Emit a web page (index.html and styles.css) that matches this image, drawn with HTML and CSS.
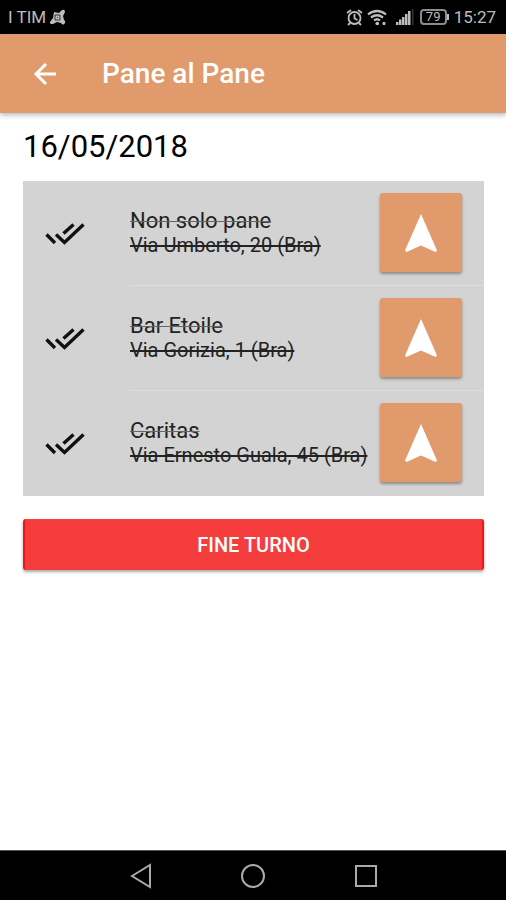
FILE: index.html
```
<!DOCTYPE html>
<html lang="it">
<head>
    <meta charset="utf-8">
    <meta name="viewport" content="width=device-width, initial-scale=1">
    <title>Pane al Pane</title>
    <link rel="stylesheet" href="styles.css">
</head>
<body>
<div class="status-bar">
    <span class="carrier">I TIM</span>
    <svg class="status-logo" width="17" height="17" viewBox="0 0 17 17">
        <path d="M5 3l5 1 3-3q3-1 3 2l-2 4 1 4q2 1 1 3-2 3-4 0l-4-1-4 2q-4 0-3-2l3-4z" fill="#bdbdbd"/>
        <path d="M6 6h5v5H6z" fill="none" stroke="#333333"/>
        <path d="M8 8h1v1H8z" fill="#333333"/>
    </svg>
    <div class="status-icons">
        <svg width="17" height="18" viewBox="0 0 17 18" fill="none" stroke="#bdbdbd" stroke-width="1.8">
            <circle cx="8.5" cy="10" r="6"/>
            <path d="M8.500 6v4.500l3 1.500M1 5l4-3M16 5l-4-3M4 15l-2 2M13 15l2 2"/>
        </svg>
        <svg class="wifi" width="20" height="18" viewBox="0 0 20 18" fill="none" stroke="#bdbdbd" stroke-width="2.2">
            <path d="M1 6.500q9-7 18 0M4 9.500q6-4.500 12 0M7 12.500q3-2.500 6 0"/>
            <path d="M9 14.500h2.500v2H9zM16 14.500h2v2h-2z" fill="#bdbdbd" stroke-width="1"/>
        </svg>
        <svg class="signal" width="19" height="18" viewBox="0 0 19 18">
            <path d="M0 14h2.500v3H0zM3 11.500h2.500V17H3zM6 9h2.500v8H6zM9 6h2.500v11H9zM12 3h2.500v14H12z" fill="#bdbdbd"/>
            <path d="M16 1h1.500v16H16z" fill="#333333"/>
        </svg>
        <span class="battery">79</span>
        <span class="clock">15:27</span>
    </div>
</div>

<header class="toolbar">
    <button class="back" type="button" aria-label="Indietro">
        <svg width="24" height="24" viewBox="0 0 24 24" fill="none" stroke="#ffffff" stroke-width="3">
            <path d="M23 12H3M13 2L3 12l10 10"/>
        </svg>
    </button>
    <h1>Pane al Pane</h1>
</header>

<main class="content">
    <h2 class="date">16/05/2018</h2>
    <ul class="stops">
        <li class="stop">
            <svg class="done" width="40" height="24" viewBox="0 0 40 24">
                <path d="M1.500 12.500l8.500 8.500M11 12.500l8.500 8L38.500 2.500M18.500 11.500l10-9"/>
            </svg>
            <div class="stop-body">
                <div class="stop-text">
                    <h3>Non solo pane</h3>
                    <p>Via Umberto, 20 (Bra)</p>
                </div>
                <button class="navigate" type="button" aria-label="Naviga">
                    <svg width="32" height="38" viewBox="0 0 32 38"><path d="M16 0L32 36.500L30.500 38L16 31.500L1.500 38L0 36.500z"/></svg>
                </button>
            </div>
        </li>
        <li class="stop">
            <svg class="done" width="40" height="24" viewBox="0 0 40 24">
                <path d="M1.500 12.500l8.500 8.500M11 12.500l8.500 8L38.500 2.500M18.500 11.500l10-9"/>
            </svg>
            <div class="stop-body">
                <div class="stop-text">
                    <h3>Bar Etoile</h3>
                    <p>Via Gorizia, 1 (Bra)</p>
                </div>
                <button class="navigate" type="button" aria-label="Naviga">
                    <svg width="32" height="38" viewBox="0 0 32 38"><path d="M16 0L32 36.500L30.500 38L16 31.500L1.500 38L0 36.500z"/></svg>
                </button>
            </div>
        </li>
        <li class="stop">
            <svg class="done" width="40" height="24" viewBox="0 0 40 24">
                <path d="M1.500 12.500l8.500 8.500M11 12.500l8.500 8L38.500 2.500M18.500 11.500l10-9"/>
            </svg>
            <div class="stop-body">
                <div class="stop-text">
                    <h3>Caritas</h3>
                    <p>Via Ernesto Guala, 45 (Bra)</p>
                </div>
                <button class="navigate" type="button" aria-label="Naviga">
                    <svg width="32" height="38" viewBox="0 0 32 38"><path d="M16 0L32 36.500L30.500 38L16 31.500L1.500 38L0 36.500z"/></svg>
                </button>
            </div>
        </li>
    </ul>
    <button class="end-shift" type="button">FINE TURNO</button>
</main>

<nav class="nav-bar">
    <button type="button" aria-label="Indietro">
        <svg width="24" height="26" viewBox="0 0 24 26"><path d="M4 13L22 2v22z"/></svg>
    </button>
    <button type="button" aria-label="Home">
        <svg width="26" height="26" viewBox="0 0 26 26"><circle cx="13" cy="13" r="11"/></svg>
    </button>
    <button type="button" aria-label="Recenti">
        <svg width="24" height="26" viewBox="0 0 24 26"><path d="M2 3h20v20H2z"/></svg>
    </button>
</nav>
</body>
</html>
```
FILE: styles.css
```
* {
    box-sizing: border-box;
}

body {
    display: flex;
    flex-direction: column;
    min-height: 100vh;
    margin: 0;
    background: #ffffff;
    color: #000000;
    font-family: Roboto, sans-serif;
}

h1, h2, h3, p, ul {
    margin: 0;
    padding: 0;
}

button {
    border: 0;
    padding: 0;
    font-family: inherit;
    cursor: pointer;
}

svg {
    display: block;
    flex-shrink: 0;
}

.status-bar {
    display: flex;
    align-items: center;
    height: 34px;
    padding: 0 10px 0 8px;
    background: #000000;
    color: #bdbdbd;
    font-size: 17px;
}

.status-logo {
    margin-left: 3px;
}

.status-icons {
    display: flex;
    align-items: center;
    margin-left: auto;
}

.wifi {
    margin-left: 4px;
}

.signal {
    margin-left: 9px;
}

.battery {
    position: relative;
    width: 27px;
    height: 16px;
    margin-left: 5px;
    border: 2px solid #8c8c8c;
    border-radius: 4px;
    font-size: 13px;
    line-height: 12px;
    text-align: center;
}

.battery:after {
    content: "";
    position: absolute;
    top: 3px;
    right: -4px;
    width: 2px;
    height: 6px;
    background: #bdbdbd;
}

.clock {
    margin-left: 7px;
}

.toolbar {
    display: flex;
    align-items: center;
    height: 79px;
    padding: 0 33px;
    background: #e19a6b;
    box-shadow: 0 2px 5px rgba(60, 80, 110, 0.4);
    color: #ffffff;
}

.back {
    background: none;
}

.toolbar h1 {
    margin-left: 45px;
    font-size: 28px;
    font-weight: 500;
    line-height: 32px;
}

.content {
    flex: 1;
    padding: 16px 22px 16px 23px;
}

.date {
    font-size: 31px;
    font-weight: 400;
    line-height: 36px;
}

.stops {
    margin-top: 16px;
    background: #d3d3d3;
    list-style: none;
}

.stop {
    display: flex;
    align-items: center;
    padding-left: 22px;
}

.done {
    fill: none;
    stroke: #111111;
    stroke-width: 3.4;
}

.stop-body {
    display: flex;
    flex: 1;
    align-items: center;
    justify-content: space-between;
    margin-left: 45px;
    padding: 12px 22px 13px 0;
    border-bottom: 1px solid #dedede;
}

.stop:last-child .stop-body {
    border-bottom-color: #d3d3d3;
}

.stop-text {
    color: #222222;
    white-space: nowrap;
}

.stop-text h3 {
    font-size: 22px;
    font-weight: 400;
    line-height: 24px;
    text-decoration: line-through 1px #666666;
}

.stop-text p {
    font-size: 20px;
    line-height: 24px;
    text-decoration: line-through;
}

.navigate {
    display: flex;
    align-items: center;
    justify-content: center;
    width: 82px;
    height: 79px;
    border-radius: 3px;
    background: #e19a6b;
    box-shadow: 0 2px 3px rgba(0, 0, 0, 0.35);
    fill: #ffffff;
}

.end-shift {
    width: 100%;
    height: 51px;
    margin-top: 23px;
    border-right: 2px solid #f41414;
    border-left: 2px solid #f41414;
    border-radius: 3px;
    background: #f53d3d;
    box-shadow: 0 2px 3px rgba(0, 0, 0, 0.35);
    color: #ffffff;
    font-size: 20px;
    font-weight: 500;
}

.nav-bar {
    display: flex;
    align-items: center;
    justify-content: center;
    gap: 88px;
    height: 50px;
    border-top: 1px solid #555555;
    background: #000000;
}

.nav-bar button {
    background: none;
}

.nav-bar svg {
    fill: none;
    stroke: #aaaaaa;
    stroke-width: 2;
}
```
